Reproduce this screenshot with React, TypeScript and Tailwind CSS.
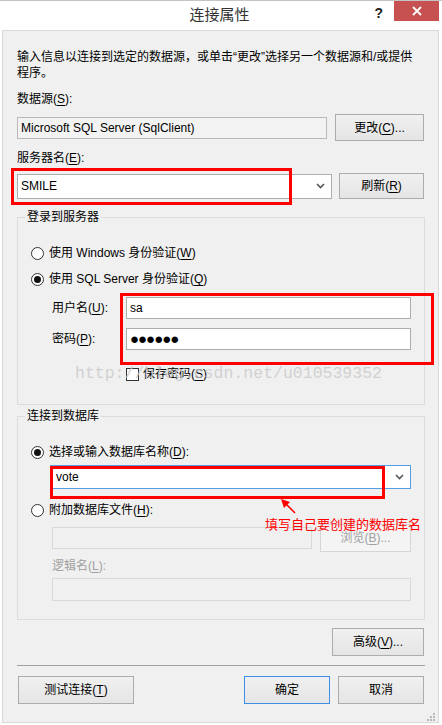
import type { ReactNode } from 'react'

function Key({ children }: { children: ReactNode }) {
  return <u className="underline-offset-2">{children}</u>
}

function Btn({
  children,
  className = '',
  primary = false,
  disabled = false,
}: {
  children: ReactNode
  className?: string
  primary?: boolean
  disabled?: boolean
}) {
  const tone = disabled
    ? 'border-[#d5d5d5] bg-[#f4f4f4] text-[#a0a0a0]'
    : primary
      ? 'border-[#3c8fe4] bg-gradient-to-b from-[#f0f0f0] to-[#e5e5e5] text-black'
      : 'border-[#acacac] bg-gradient-to-b from-[#f0f0f0] to-[#e5e5e5] text-black'
  return (
    <button
      type="button"
      className={`flex shrink-0 items-center justify-center border leading-[16px] ${tone} ${className}`}
    >
      {children}
    </button>
  )
}

function Chevron() {
  return (
    <svg width="9" height="6" viewBox="0 0 9 6" className="shrink-0">
      <path d="M1 1 L4.5 4.5 L8 1" fill="none" stroke="#555" strokeWidth="1.6" />
    </svg>
  )
}

function Radio({ checked = false }: { checked?: boolean }) {
  return (
    <span className="flex h-[13px] w-[13px] shrink-0 items-center justify-center rounded-full border border-[#333] bg-white">
      {checked && <span className="h-[7px] w-[7px] rounded-full bg-[#111]" />}
    </span>
  )
}

function Group({ title, className = '', children }: { title: string; className?: string; children: ReactNode }) {
  return (
    <fieldset className={`w-[408px] border border-[#dcdcdc] px-0 ${className}`}>
      <legend className="ml-[7px] px-[2px] leading-[16px]">{title}</legend>
      <div className="pl-[13px]">{children}</div>
    </fieldset>
  )
}

export default function App() {
  return (
    <div className="relative h-[725px] w-[442px] overflow-hidden border-t border-[#c4c4c4] bg-white font-['Liberation_Sans','Noto_Sans_CJK_SC',sans-serif] text-[12px] text-black">
      {/* title bar */}
      <div className="flex h-[29px] items-start">
        <div className="flex-1" />
        <div className="pt-[5px] text-[15px] leading-[18px] text-[#333]">连接属性</div>
        <div className="flex flex-1 items-start justify-end pr-[3px]">
          <span className="mr-[11px] mt-[4px] text-[14px] font-bold leading-[16px] text-[#222]">?</span>
          <button type="button" className="flex h-[20px] w-[45px] items-center justify-center bg-[#c75050]">
            <svg width="10" height="10" viewBox="0 0 10 10">
              <path d="M1 1 L9 9 M9 1 L1 9" stroke="#fff" strokeWidth="1.8" />
            </svg>
          </button>
        </div>
      </div>

      {/* client area */}
      <div className="ml-[2px] flex h-[693px] w-[437px] flex-col border border-[#d9d9d9] bg-[#f0f0f0] px-[14px] leading-[16px]">
        <p className="mt-[18px] whitespace-nowrap">
          输入信息以连接到选定的数据源，或单击“更改”选择另一个数据源和/或提供
          <br />
          程序。
        </p>

        <div className="mt-[10px]">
          数据源(<Key>S</Key>):
        </div>
        <div className="mt-[7px] flex h-[27px] items-center gap-[8px]">
          <div className="flex h-[22px] w-[310px] items-center border border-[#b9b9b9] bg-[#f3f3f3] pl-[3px]">
            Microsoft SQL Server (SqlClient)
          </div>
          <Btn className="h-[27px] w-[89px]">
            更改(<Key>C</Key>)...
          </Btn>
        </div>

        <div className="mt-[9px]">
          服务器名(<Key>E</Key>):
        </div>
        <div className="mt-[7px] flex h-[26px] items-center gap-[7px]">
          <div className="flex h-[25px] w-[315px] items-center justify-between border border-[#abadb3] bg-white pl-[3px] pr-[6px]">
            <span>SMILE</span>
            <Chevron />
          </div>
          <Btn className="h-[26px] w-[85px]">
            刷新(<Key>R</Key>)
          </Btn>
        </div>

        {/* login group */}
        <Group title="登录到服务器" className="mt-[10px] pb-[22px]">
          <div className="mt-[20px] flex items-center gap-[5px]">
            <Radio />
            <span>
              使用 Windows 身份验证(<Key>W</Key>)
            </span>
          </div>
          <div className="mt-[10px] flex items-center gap-[5px]">
            <Radio checked />
            <span>
              使用 SQL Server 身份验证(<Key>Q</Key>)
            </span>
          </div>
          <div className="mt-[10px] flex h-[22px] items-center pl-[21px]">
            <span className="w-[74px]">
              用户名(<Key>U</Key>):
            </span>
            <div className="flex h-[22px] w-[285px] items-center border border-[#abadb3] bg-white pl-[3px]">sa</div>
          </div>
          <div className="mt-[9px] flex h-[22px] items-center pl-[21px]">
            <span className="w-[74px]">
              密码(<Key>P</Key>):
            </span>
            <div className="flex h-[22px] w-[285px] items-center border border-[#abadb3] bg-white pl-[3px] text-[15px] tracking-[-1px]">
              ●●●●●●
            </div>
          </div>
          <div className="mt-[16px] flex items-center gap-[4px] pl-[95px]">
            <span className="h-[13px] w-[13px] shrink-0 border border-[#333] bg-white" />
            <span>
              保存密码(<Key>S</Key>)
            </span>
          </div>
        </Group>

        {/* database group */}
        <Group title="连接到数据库" className="mt-[3px] pb-[18px]">
          <div className="mt-[20px] flex items-center gap-[5px]">
            <Radio checked />
            <span>
              选择或输入数据库名称(<Key>D</Key>):
            </span>
          </div>
          <div className="ml-[19px] mt-[5px] flex h-[24px] w-[361px] items-center justify-between border border-[#569de5] bg-white pl-[5px] pr-[6px]">
            <span>vote</span>
            <Chevron />
          </div>
          <div className="mt-[13px] flex items-center gap-[5px]">
            <Radio />
            <span>
              附加数据库文件(<Key>H</Key>):
            </span>
          </div>
          <div className="ml-[21px] mt-[6px] flex h-[28px] items-center gap-[8px]">
            <div className="h-[22px] w-[260px] border border-[#d9d9d9] bg-[#f0f0f0]" />
            <Btn disabled className="h-[28px] w-[91px]">
              浏览(<Key>B</Key>)...
            </Btn>
          </div>
          <div className="ml-[21px] mt-[6px] text-[#a0a0a0]">
            逻辑名(<Key>L</Key>):
          </div>
          <div className="ml-[21px] mt-[4px] h-[23px] w-[359px] border border-[#d9d9d9] bg-[#f0f0f0]" />
        </Group>

        <div className="mt-[8px] flex w-[408px] justify-end pr-[1px]">
          <Btn className="h-[28px] w-[92px]">
            高级(<Key>V</Key>)...
          </Btn>
        </div>

        <div className="mt-[9px] h-px w-[408px] bg-[#a0a0a0]" />

        <div className="mt-[10px] flex w-[408px] items-center">
          <Btn className="ml-px h-[28px] w-[116px]">
            测试连接(<Key>T</Key>)
          </Btn>
          <div className="flex-1" />
          <Btn primary className="h-[28px] w-[86px]">
            确定
          </Btn>
          <Btn className="ml-[8px] mr-px h-[28px] w-[86px]">取消</Btn>
        </div>
      </div>

      {/* resize grip */}
      <svg className="absolute left-[427px] top-[712px]" width="9" height="9" viewBox="0 0 9 9">
        <rect x="6" y="0" width="2" height="2" fill="#b8b8b8" />
        <rect x="3" y="3" width="2" height="2" fill="#b8b8b8" />
        <rect x="6" y="3" width="2" height="2" fill="#b8b8b8" />
        <rect x="0" y="6" width="2" height="2" fill="#b8b8b8" />
        <rect x="3" y="6" width="2" height="2" fill="#b8b8b8" />
        <rect x="6" y="6" width="2" height="2" fill="#b8b8b8" />
      </svg>

      {/* watermark */}
      <div className="pointer-events-none absolute left-[75px] top-[362px] font-['Liberation_Mono',monospace] text-[16.5px] leading-[22px] text-[#c8c8c8]/80">
        http://blog.csdn.net/u010539352
      </div>

      {/* red annotations */}
      <div className="pointer-events-none absolute left-[11px] top-[167px] h-[37px] w-[281px] border-[3px] border-[#ff0000]" />
      <div className="pointer-events-none absolute left-[120px] top-[292px] h-[72px] w-[314px] border-[3px] border-[#ff0000]" />
      <div className="pointer-events-none absolute left-[50px] top-[465px] h-[33px] w-[335px] border-[3px] border-[#ff0000]" />
      <svg className="pointer-events-none absolute left-[278px] top-[495px]" width="22" height="22" viewBox="0 0 22 22">
        <path d="M17 17 L7 7" stroke="#ff0000" strokeWidth="1.5" />
        <path d="M3 3 L12 6 L6 12 Z" fill="#ff0000" />
      </svg>
      <div className="pointer-events-none absolute left-[265px] top-[514px] whitespace-nowrap font-['Noto_Sans_CJK_SC',sans-serif] text-[13px] leading-[18px] text-[#ff0000]">
        填写自己要创建的数据库名
      </div>
    </div>
  )
}
